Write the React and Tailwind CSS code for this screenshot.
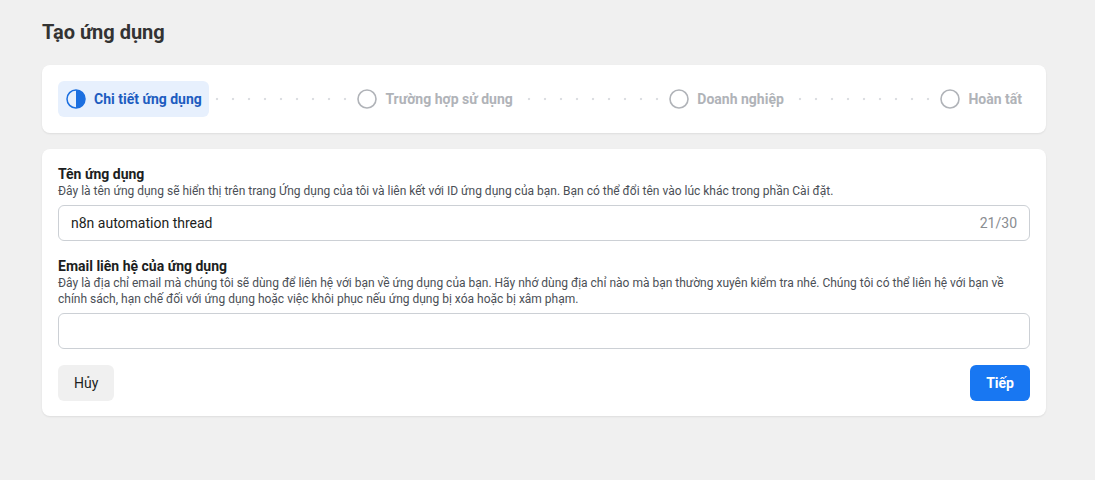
import React from "react"

const steps = [
    { label: "Chi tiết ứng dụng", active: true },
    { label: "Trường hợp sử dụng" },
    { label: "Doanh nghiệp" },
    { label: "Hoàn tất" },
]

const HalfCircle = () => (
    <svg width="20" height="20" viewBox="0 0 20 20">
        <circle cx="10" cy="10" r="9" fill="none" stroke="#1b6fe0" strokeWidth="1.5" />
        <path d="M10 1 A9 9 0 0 1 10 19 Z" fill="#1b6fe0" />
    </svg>
)

const EmptyCircle = () => (
    <svg width="20" height="20" viewBox="0 0 20 20">
        <circle cx="10" cy="10" r="9" fill="none" stroke="#b0b3b8" strokeWidth="1.6" />
    </svg>
)

const Dots = () => (
    <div className="flex-1 h-1 bg-[radial-gradient(circle,#dcdee2_1.1px,transparent_1.6px)] bg-[length:16px_4px] bg-repeat-x bg-[position:0_0]" />
)

const App = () => {
    return (
        <div className="min-h-screen bg-[#f0f0f0] pl-[42px] pr-[49px] pt-[19px] pb-10 font-['Roboto',sans-serif] text-[#1c1e21]">
            <h1 className="text-[20px] leading-[26px] font-bold text-[#333] mb-[20px]">
                Tạo ứng dụng
            </h1>

            <div className="bg-white rounded-lg shadow-[0_1px_2px_rgba(0,0,0,0.08)] px-4 py-4 flex items-center">
                {steps.map((s, i) => (
                    <React.Fragment key={s.label}>
                        {i > 0 && <Dots />}
                        {s.active ? (
                            <div className="flex items-center gap-2 h-9 pl-2 pr-[7px] rounded-md bg-[#e7f0fd]">
                                <HalfCircle />
                                <span className="text-sm font-bold text-[#1d5cc0]">{s.label}</span>
                            </div>
                        ) : (
                            <div className="flex items-center gap-2 h-9 px-2">
                                <EmptyCircle />
                                <span className="text-sm font-bold text-[#b0b3b8]">{s.label}</span>
                            </div>
                        )}
                    </React.Fragment>
                ))}
            </div>

            <div className="mt-4 bg-white rounded-lg shadow-[0_1px_2px_rgba(0,0,0,0.08)] px-4 pt-4 pb-[15px]">
                <div className="text-sm leading-[18px] font-bold text-[#1c1e21]">Tên ứng dụng</div>
                <p className="text-xs leading-4 text-[#4b4f56] mt-0">
                    Đây là tên ứng dụng sẽ hiển thị trên trang Ứng dụng của tôi và liên kết với ID ứng dụng của bạn. Bạn có thể đổi tên vào lúc khác trong phần Cài đặt.
                </p>
                <div className="mt-1.5 h-9 flex items-center justify-between border border-[#ccd0d5] rounded-md px-3">
                    <span className="text-sm text-[#1c1e21]">n8n automation thread</span>
                    <span className="text-sm text-[#8a8d91]">21/30</span>
                </div>

                <div className="mt-4 text-sm leading-[18px] font-bold text-[#1c1e21]">Email liên hệ của ứng dụng</div>
                <p className="text-xs leading-4 text-[#4b4f56] pr-4">
                    Đây là địa chỉ email mà chúng tôi sẽ dùng để liên hệ với bạn về ứng dụng của bạn. Hãy nhớ dùng địa chỉ nào mà bạn thường xuyên kiểm tra nhé. Chúng tôi có thể liên hệ với bạn về chính sách, hạn chế đối với ứng dụng hoặc việc khôi phục nếu ứng dụng bị xóa hoặc bị xâm phạm.
                </p>
                <input
                    className="mt-1.5 w-full h-9 border border-[#ccd0d5] rounded-md px-3 text-sm outline-none"
                    type="email"
                />

                <div className="mt-4 flex justify-between">
                    <button className="h-9 px-4 rounded-md bg-[#f0f0f0] text-sm text-[#1c1e21]">Hủy</button>
                    <button className="h-9 px-4 rounded-md bg-[#1877f2] text-sm font-bold text-white">Tiếp</button>
                </div>
            </div>
        </div>
    )
}

export default App
